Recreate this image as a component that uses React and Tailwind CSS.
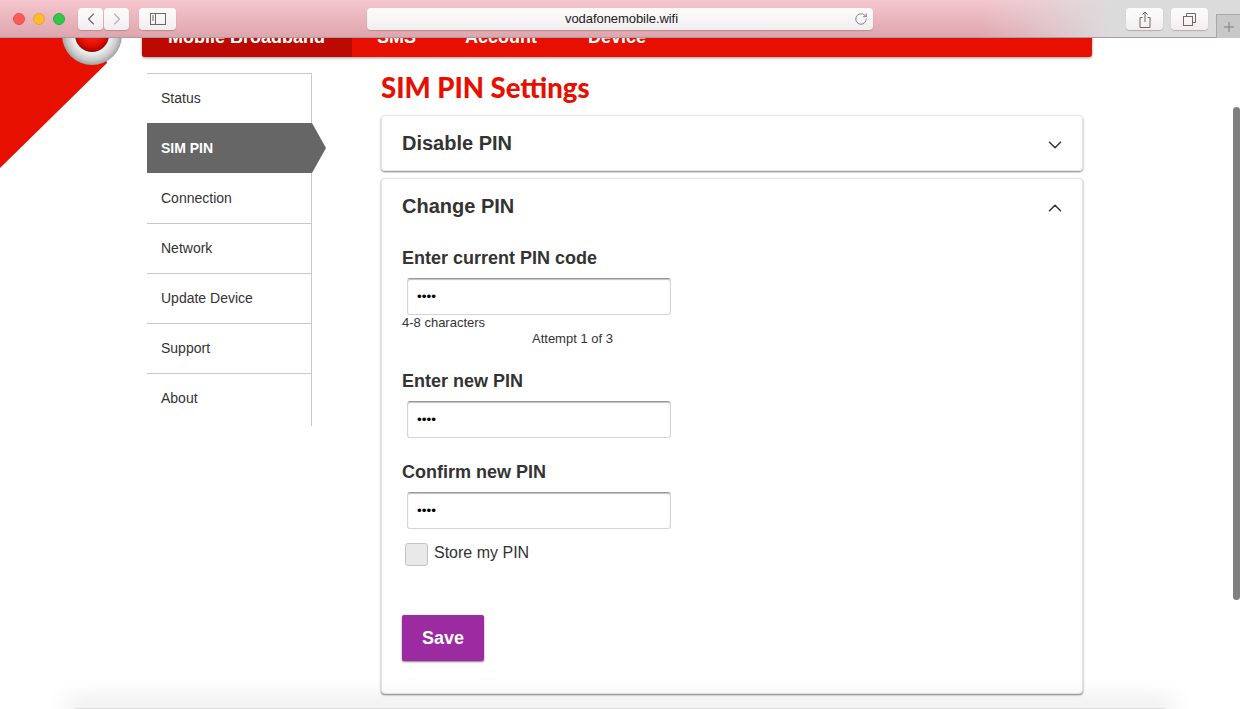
import React from 'react';
import { ChevronDown, ChevronUp, ChevronLeft, ChevronRight, RotateCw, Plus } from 'lucide-react';

const sideItems = ['Status', 'SIM PIN', 'Connection', 'Network', 'Update Device', 'Support', 'About'];

const ToolButton = ({ className, children }) => (
  <div className={`h-[22px] bg-gradient-to-b from-[#fdfcfc] to-[#f1eeee] rounded-[4px] shadow-[0_1px_1px_rgba(120,80,80,0.35)] flex items-center justify-center text-[#6d6868] ${className}`}>
    {children}
  </div>
);

const PinField = ({ label }) => (
  <div>
    <h3 className="mb-[9px] text-[18px] leading-[22px] font-bold text-[#333]">{label}</h3>
    <input
      type="password"
      readOnly
      value="1234"
      className="block ml-[5px] w-[264px] h-[37px] bg-white rounded-[3px] border border-[#d4d4d4] border-t-[#999] shadow-[inset_0_1px_1px_rgba(0,0,0,0.25)] pl-[9px] text-[13.5px] text-black outline-none"
    />
  </div>
);

export default function App() {
  return (
    <div className="relative w-[1240px] h-[709px] overflow-hidden bg-white font-['Liberation_Sans',Arial,sans-serif]">
      {/* browser toolbar */}
      <div className="relative z-20 h-[38px] flex items-start pt-2 border-b border-[#a89c9e] bg-[linear-gradient(90deg,rgba(220,219,220,0)_980px,#dcdbdc_1110px),linear-gradient(180deg,#f5c6ce,#dfa5ad)]">
        <div className="flex gap-2 ml-[13px] mt-[5px]">
          <span className="w-3 h-3 rounded-full bg-[#fc5b57] border border-[#e5504c]"></span>
          <span className="w-3 h-3 rounded-full bg-[#fdbc2e] border border-[#e2a62a]"></span>
          <span className="w-3 h-3 rounded-full bg-[#33c748] border border-[#2cb03f]"></span>
        </div>
        <ToolButton className="w-[25px] ml-[13px]"><ChevronLeft size={20} strokeWidth={1.3} /></ToolButton>
        <ToolButton className="w-[25px] ml-px text-[#b5b0b0]"><ChevronRight size={20} strokeWidth={1.3} /></ToolButton>
        <ToolButton className="w-[37px] ml-[10px]">
          <svg width="16" height="12" viewBox="0 0 16 12" fill="none" stroke="currentColor">
            <rect x="0.5" y="0.5" width="15" height="11" />
            <path d="M5.5 0.5v11M2 3h2M2 5h2M2 7h2" />
          </svg>
        </ToolButton>
        <ToolButton className="relative w-[506px] ml-[191px] pl-[3px] text-[13px] tracking-[-0.005em] text-[#222]">
          vodafonemobile.wifi
          <RotateCw size={14} strokeWidth={1.3} className="absolute right-[5px] top-1 text-[#666]" />
        </ToolButton>
        <ToolButton className="w-[37px] ml-[253px]">
          <svg width="12" height="17" viewBox="0 0 12 17" fill="none" stroke="currentColor">
            <path d="M3.5 6.5H1v10h10v-10H8.500M6 11V1M3.500 3.500L6 1l2.500 2.500" />
          </svg>
        </ToolButton>
        <ToolButton className="w-[37px] ml-2">
          <svg width="13" height="13" viewBox="0 0 13 13" fill="none" stroke="currentColor">
            <rect x="0.5" y="3.500" width="9" height="9" />
            <path d="M3.500 3.500v-3h9v9h-3" />
          </svg>
        </ToolButton>
        <div className="w-6 h-[24px] ml-2 mt-[6px] bg-[#c9c8c8] border-l border-t border-[#a9a9a9] flex items-center justify-center text-[#666]">
          <Plus size={16} strokeWidth={1.1} />
        </div>
      </div>

      {/* red corner and logo */}
      <svg className="absolute left-0 top-[38px]" width="140" height="132" viewBox="0 0 140 132">
        <path d="M0 0H100L107 25L0 130Z" fill="#e60f00" />
      </svg>
      <div className="absolute left-[62px] top-[5px] w-[60px] h-[60px] rounded-full bg-[radial-gradient(circle_at_50%_50%,#f0f0f0_42%,#c8c8c8_60%,#a0a0a0_71%)] flex items-start justify-center pt-[12px]">
        <div className="w-[34px] h-[35px] rounded-full bg-[radial-gradient(circle_at_50%_45%,#f01a10_30%,#dc0c00_55%,#a00800_71%)]"></div>
      </div>

      {/* top nav, runs under the toolbar */}
      <nav className="relative z-10 ml-[142px] mr-[148px] -mt-[30px] h-[49px] flex bg-[#e60f00] rounded-[3px] shadow-[0_1px_3px_rgba(0,0,0,0.4)] text-white font-bold text-[18px] overflow-hidden">
        <div className="w-[210px] bg-[#bd0a00] pl-[26px] pt-4">Mobile Broadband</div>
        <div className="pl-[25px] pt-4">SMS</div>
        <div className="pl-[49px] pt-4">Account</div>
        <div className="pl-[51px] pt-4">Device</div>
      </nav>

      <div className="flex pl-[147px] pt-4">
        {/* side menu */}
        <ul className="w-[165px] h-[353px] border-r border-t border-[#c8c8c8] text-[14px] text-[#333]">
          {sideItems.map((item, index) => (
            <li
              key={item}
              className={
                item === 'SIM PIN'
                  ? 'relative h-[50px] -mr-px bg-[#666] text-white font-bold flex items-center pl-[14px] z-10'
                  : `${index === 0 ? 'h-[49px]' : 'h-[50px]'} flex items-center pl-[14px] ${index > 2 ? 'border-t border-[#c8c8c8]' : ''}`
              }
            >
              {item}
              {item === 'SIM PIN' && (
                <span className="absolute left-full top-0 w-[14px] h-[50px] bg-[#666] [clip-path:polygon(0_0,100%_50%,0_100%)]"></span>
              )}
            </li>
          ))}
        </ul>

        {/* main column */}
        <main className="w-[702px] ml-[69px]">
          <h1 className="h-[34px] -mt-[2px] text-[27.5px] leading-[34px] font-black text-[#e60f00] font-['Lato',sans-serif]">SIM PIN Settings</h1>

          <section className="h-[56px] mt-[10px] rounded-[4px] border border-[#e6e6e6] shadow-[0_1px_2px_rgba(0,0,0,0.5)] flex items-center justify-between pl-5 pr-4">
            <h2 className="text-[20px] font-bold text-[#333]">Disable PIN</h2>
            <ChevronDown size={22} strokeWidth={1.6} className="text-[#333] mt-[3px]" />
          </section>

          <section className="relative h-[516px] mt-[7px] rounded-[4px] border border-[#e6e6e6] shadow-[0_1px_2px_rgba(0,0,0,0.5)] pl-5 pr-4 bg-white">
            <div className="flex items-center justify-between h-[54px]">
              <h2 className="text-[20px] font-bold text-[#333]">Change PIN</h2>
              <ChevronUp size={22} strokeWidth={1.6} className="text-[#333] mt-[4px]" />
            </div>

            <div className="pt-[14px]">
              <PinField label="Enter current PIN code" />
              <p className="text-[13px] leading-[16px] text-[#333]">4-8 characters</p>
              <p className="text-[13px] leading-[16px] text-[#333] pl-[130px]">Attempt 1 of 3</p>
              <div className="mt-[23px]">
                <PinField label="Enter new PIN" />
              </div>
              <div className="mt-[23px]">
                <PinField label="Confirm new PIN" />
              </div>
              <label className="flex items-start mt-[14px] ml-[3px] text-[16px] leading-[20px] text-[#333]">
                <span className="w-[23px] h-[23px] rounded-[3px] bg-[#e9e9e9] border border-[#c4c4c4]"></span>
                <span className="ml-[6px]">Store my PIN</span>
              </label>
              <button className="block mt-[49px] w-[82px] h-[46px] rounded-[2px] bg-[#9c2aa0] text-white font-bold text-[18px] shadow-[0_1px_2px_rgba(0,0,0,0.5)]">
                Save
              </button>
            </div>
          </section>
        </main>
      </div>

      {/* footer shadow and overlay scrollbar */}
      <div className="absolute left-[75px] right-[75px] bottom-0 h-px bg-[#dedede] shadow-[0_0_26px_8px_rgba(0,0,0,0.1)] pointer-events-none"></div>
      <div className="absolute right-0 top-[107px] w-[7px] h-[493px] rounded-[4px] bg-[#808080]"></div>
    </div>
  );
}
